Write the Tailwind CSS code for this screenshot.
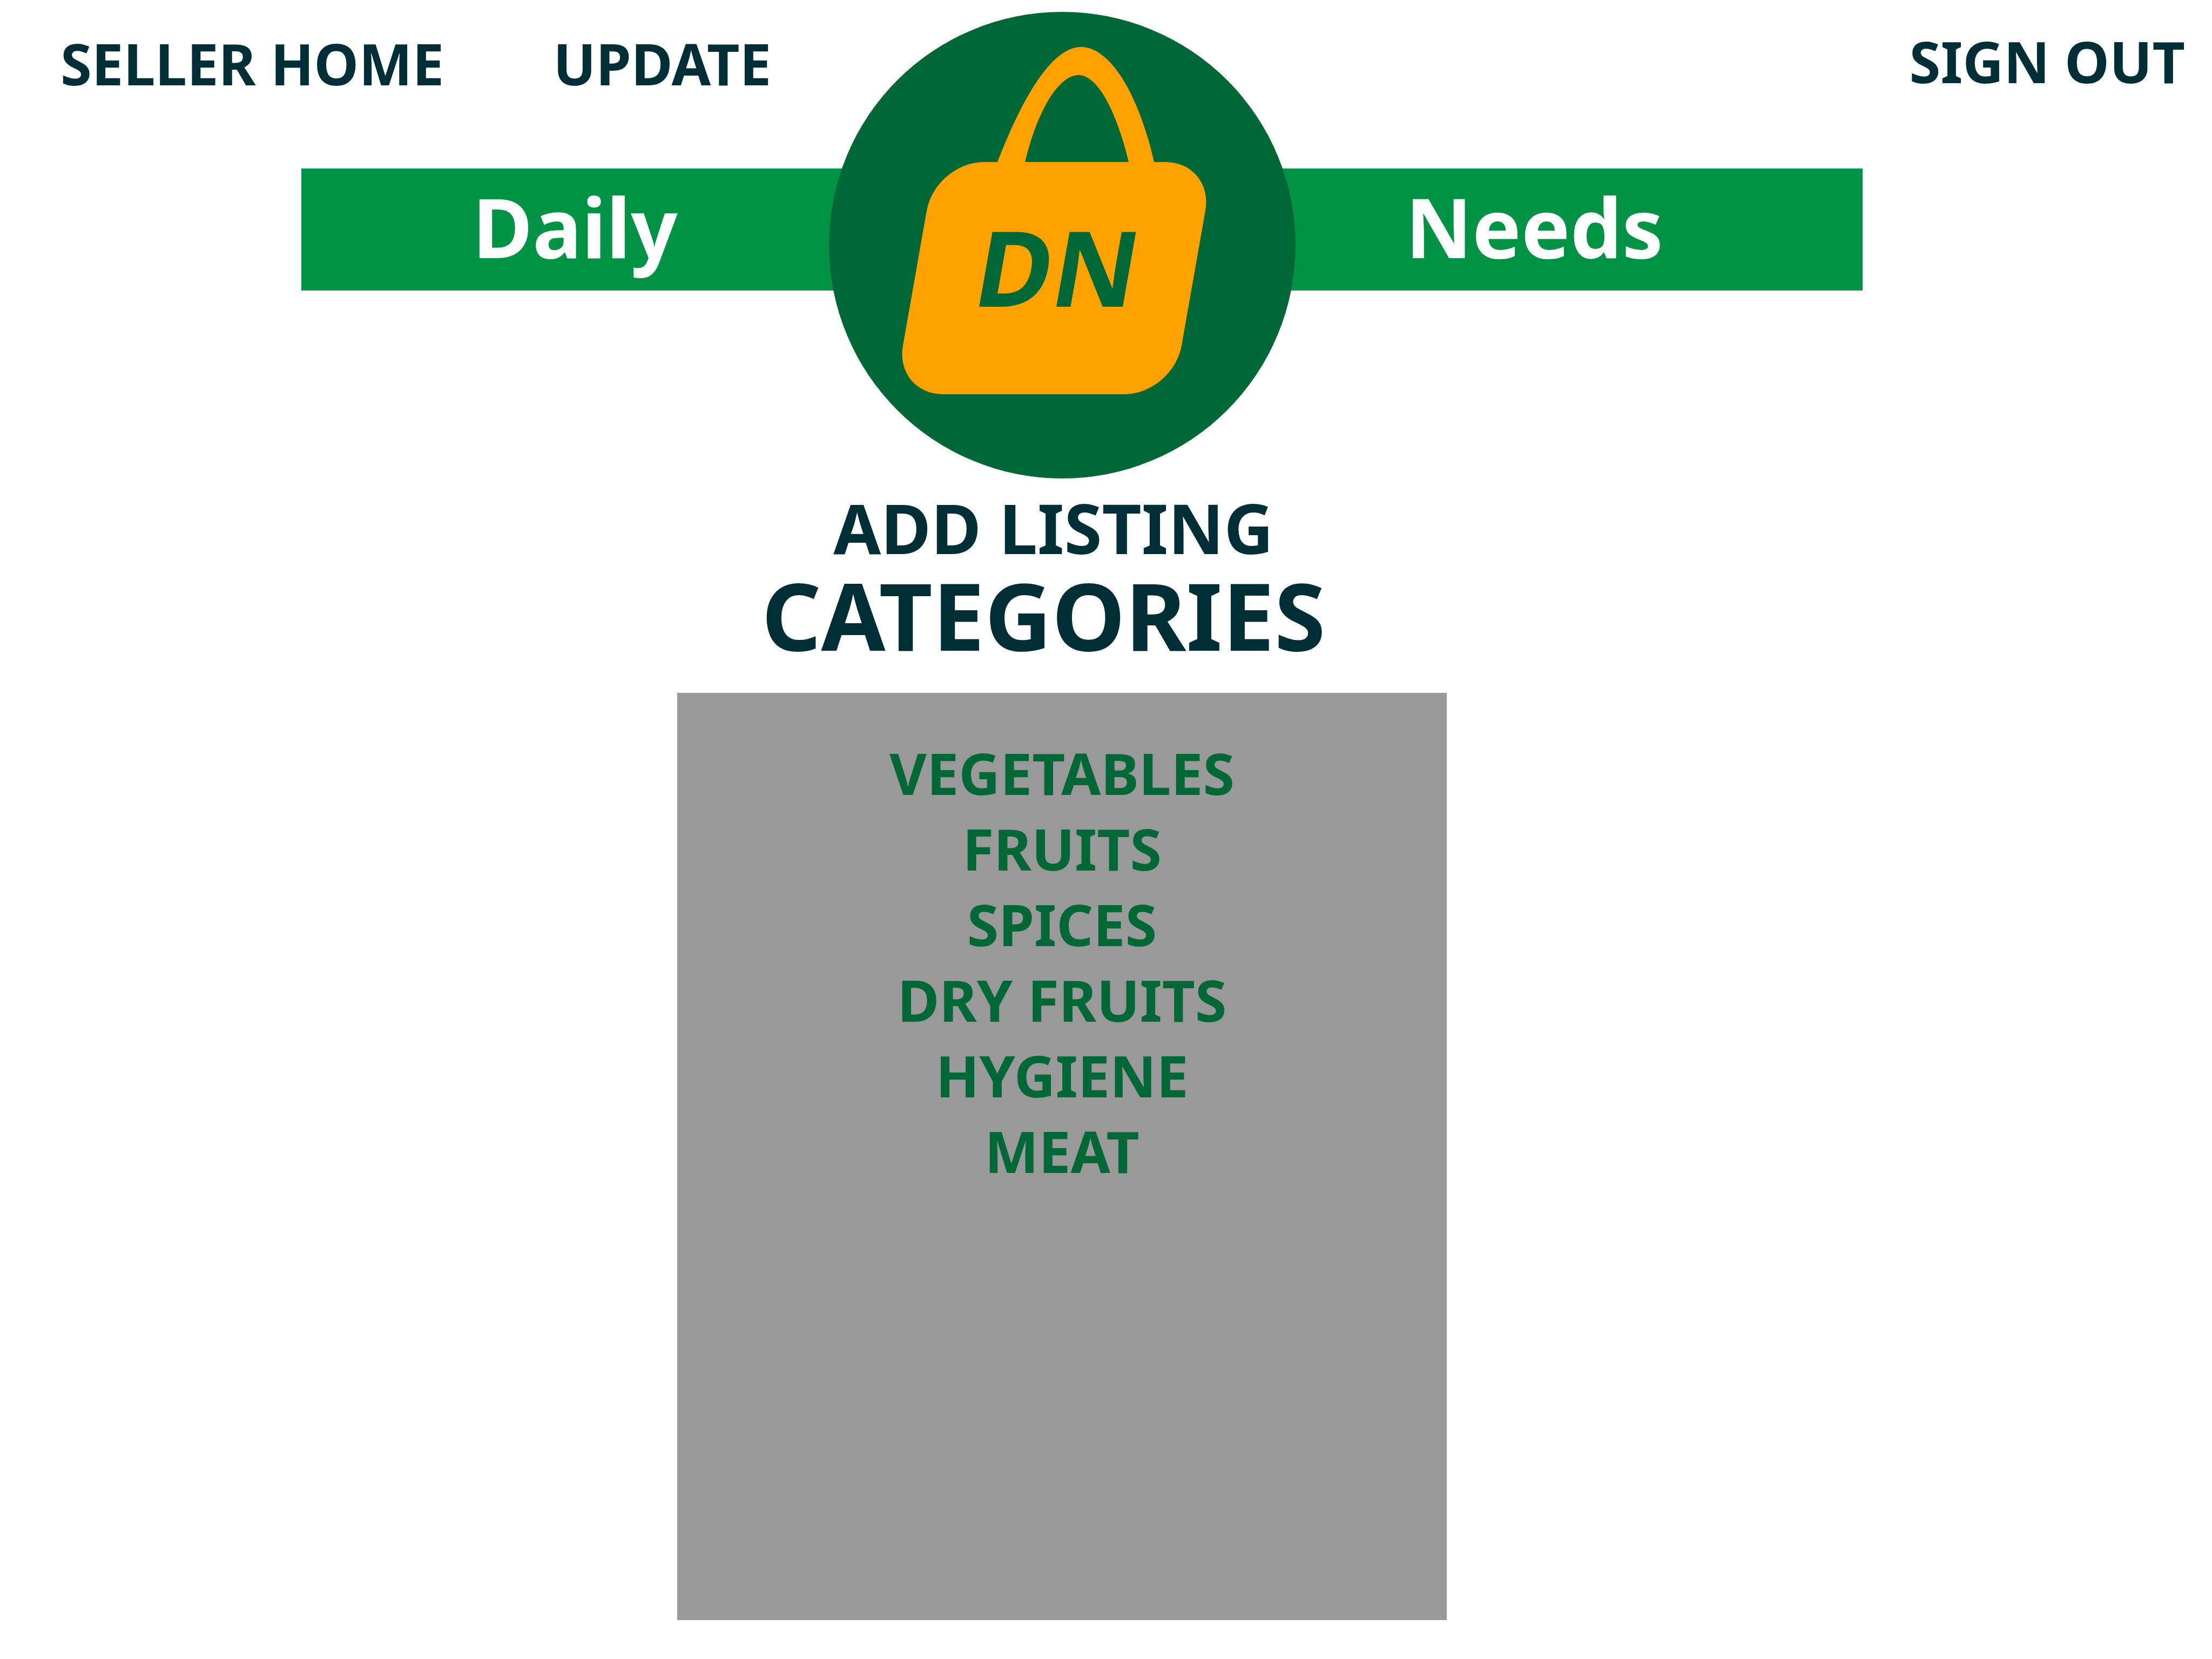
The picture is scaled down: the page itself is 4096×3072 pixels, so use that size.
<!DOCTYPE html>
<html lang="en">
<head>
<meta charset="utf-8">
<title>Daily Needs</title>
<script src="https://cdn.jsdelivr.net/npm/@tailwindcss/browser@4"></script>
</head>
<body class="min-h-screen bg-white font-['Noto_Sans',sans-serif] font-bold text-[#002e36]">
<header class="relative">
  <nav class="flex h-[312px] items-start justify-between pl-[112px] pr-[50px] text-[105px] leading-[140px]">
    <div class="flex gap-[202px] pt-[48px]">
      <a href="#">SELLER HOME</a>
      <a href="#">UPDATE</a>
    </div>
    <a href="#" class="pt-[44px]">SIGN OUT</a>
  </nav>
  <div class="ml-[13.62%] mr-[15.8%] flex h-[226px] items-center justify-between bg-[#009245] pb-[10px] pl-[317px] pr-[369px] text-[152px] leading-[210px] text-white">
    <span>Daily</span>
    <span>Needs</span>
  </div>
  <svg class="absolute left-[48.02%] top-[22px] size-[864px] -translate-x-1/2" viewBox="0 0 864 864" role="img" aria-label="Daily Needs">
    <circle cx="432" cy="432" r="432" fill="#006837"/>
    <path fill="#ffa200" d="M312 278C362 150 415 65 467 65C520 65 573 150 602 278V285H555V278C530 175 495 117 462 117C428 117 388 175 363 278V285H312Z"/>
    <g transform="translate(417 493) skewX(-10)">
      <rect x="-258" y="-215" width="516" height="430" rx="90" fill="#ffa200"/>
      <text x="4" y="53" text-anchor="middle" font-size="194" fill="#006837">DN</text>
    </g>
  </svg>
</header>
<main class="ml-[30.62%] mr-[34.6%] pt-[355px]">
  <h2 class="pl-[289px] text-[127px] leading-[168px] whitespace-nowrap">ADD LISTING</h2>
  <h1 class="pl-[156px] text-[172px] leading-[154px] whitespace-nowrap">CATEGORIES</h1>
  <ul class="mt-[68px] flex h-[1717px] flex-col items-center bg-[#999999] pt-[78px] text-[106px] leading-[140px] text-[#006837]">
    <li><a href="#">VEGETABLES</a></li>
    <li><a href="#">FRUITS</a></li>
    <li><a href="#">SPICES</a></li>
    <li><a href="#">DRY FRUITS</a></li>
    <li><a href="#">HYGIENE</a></li>
    <li><a href="#">MEAT</a></li>
  </ul>
</main>
</body>
</html>
